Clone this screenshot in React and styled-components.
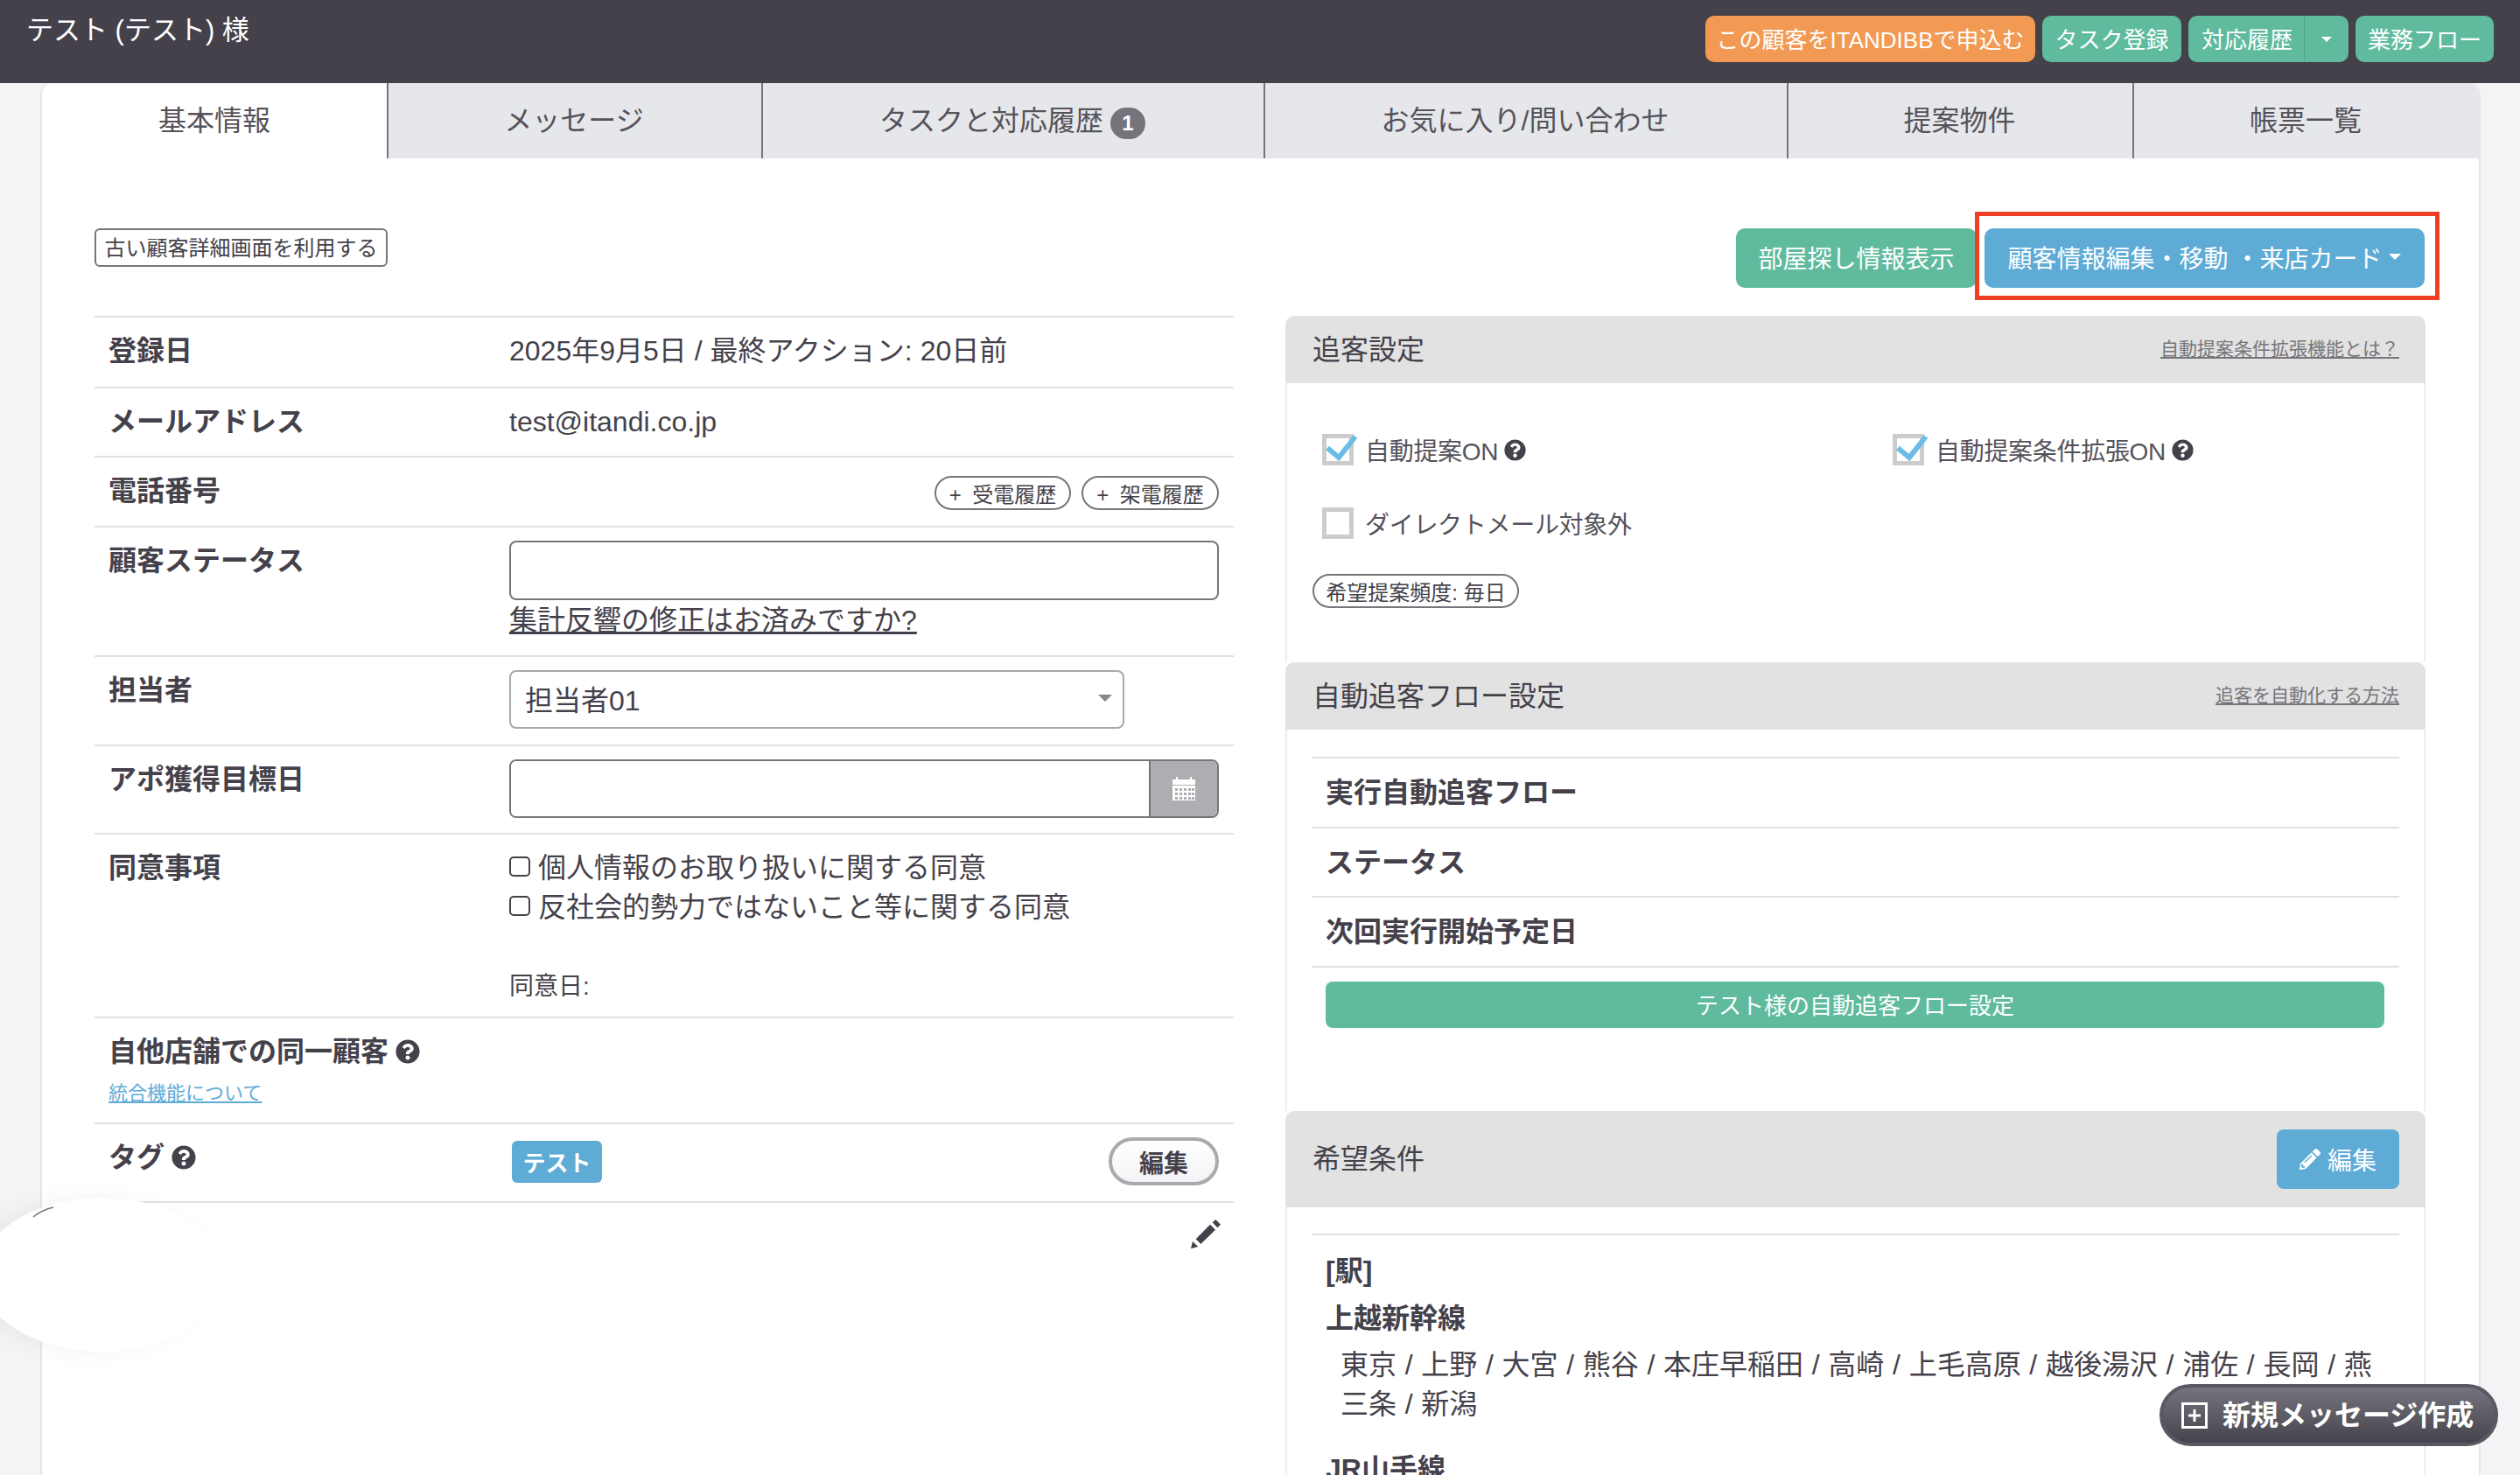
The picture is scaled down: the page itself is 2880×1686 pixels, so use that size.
import React from 'react'
import styled, { createGlobalStyle } from 'styled-components'
import { FaQuestionCircle, FaPencilAlt } from 'react-icons/fa'

const dark = '#44414a'
const green = '#60bb9e'
const blue = '#5eabd6'
const line = '#e0e0e0'

const GlobalStyle = createGlobalStyle`
  html, body {
    margin: 0;
    padding: 0;
    background: #f4f4f6;
  }
  body {
    font-family: "Liberation Sans", "Noto Sans CJK JP", sans-serif;
    color: ${dark};
    font-size: 32px;
  }
  * {
    box-sizing: border-box;
  }
`

const Page = styled.div`
  position: relative;
  width: 2880px;
  height: 1686px;
  overflow: hidden;
`

const Header = styled.header`
  height: 95px;
  background: ${dark};
  display: flex;
  justify-content: space-between;
  padding: 18px 30px 0 30px;
`

const CustomerName = styled.div`
  color: #fff;
  font-size: 31px;
  line-height: 34px;
`

const HeaderActions = styled.div`
  display: flex;
  gap: 8px;
  height: 53px;
`

const HeaderButton = styled.button`
  border: 0;
  border-radius: 10px;
  background: ${(p) => (p.$orange ? '#f29a53' : green)};
  color: #fff;
  font: inherit;
  font-size: 26px;
  padding: 0 0 2px;
  width: ${(p) => p.$w}px;
  height: 53px;
  white-space: nowrap;
  display: flex;
  align-items: center;
  justify-content: center;
`

const SplitButton = styled.div`
  display: flex;
  border-radius: 10px;
  overflow: hidden;
  background: ${green};
  color: #fff;
`

const SplitMain = styled.div`
  font-size: 26px;
  padding: 0 15px 2px;
  display: flex;
  align-items: center;
  width: 133px;
  white-space: nowrap;
  border-right: 1px solid #4fa488;
`

const SplitCaret = styled.div`
  width: 50px;
  display: flex;
  align-items: center;
  justify-content: center;
`

const Caret = styled.span`
  display: inline-block;
  border-left: ${(p) => p.$size || 7}px solid transparent;
  border-right: ${(p) => p.$size || 7}px solid transparent;
  border-top: ${(p) => p.$size || 7}px solid ${(p) => p.$color || '#fff'};
`

const Card = styled.main`
  margin: 0 45px 0 46px;
  height: 1591px;
  background: #fff;
  border-left: 2px solid #e6e6ea;
  border-right: 2px solid #e6e6ea;
  border-top-left-radius: 14px;
  border-top-right-radius: 14px;
  overflow: hidden;
`

const Tabs = styled.nav`
  display: grid;
  grid-template-columns: 394px 428px 574px 598px 395px 396px;
  height: 86px;
`

const Tab = styled.div`
  display: flex;
  align-items: center;
  justify-content: center;
  gap: 8px;
  padding: ${(p) => (p.$active ? '0 0 6px' : '0 2px 6px 0')};
  font-size: 32px;
  color: #55525a;
  background: ${(p) => (p.$active ? '#fff' : '#e6e7ea')};
  border-left: ${(p) => (p.$active ? '0' : '2px solid #77757c')};
`

const TabBadge = styled.span`
  width: 40px;
  height: 36px;
  margin-top: 12px;
  border-radius: 18px;
  background: #75737c;
  color: #fff;
  font-size: 24px;
  font-weight: 700;
  display: flex;
  align-items: center;
  justify-content: center;
`

const Content = styled.div`
  padding: 80px 60px 0 60px;
`

const Toolbar = styled.div`
  display: flex;
  justify-content: space-between;
  align-items: flex-start;
  width: 2663px;
  height: 100px;
`

const OldButton = styled.button`
  width: 335px;
  height: 44px;
  padding: 0 0 3px;
  border: 2px solid #77757c;
  border-radius: 6px;
  background: #fff;
  color: ${dark};
  font: inherit;
  font-size: 24px;
`

const ToolbarActions = styled.div`
  display: flex;
  gap: 9px;
`

const BigButton = styled.button`
  height: 68px;
  width: ${(p) => p.$w}px;
  border: 0;
  border-radius: 10px;
  background: ${(p) => p.$bg};
  color: #fff;
  font: inherit;
  font-size: 28px;
  padding: 0 0 3px;
  white-space: nowrap;
  display: flex;
  align-items: center;
  justify-content: center;
  gap: 8px;
`

const Highlighted = styled.div`
  position: relative;
`

const RedFrame = styled.div`
  position: absolute;
  top: -19px;
  left: -11px;
  right: -17px;
  bottom: -14px;
  border: 5px solid #ee3f23;
  pointer-events: none;
`

const Columns = styled.div`
  display: grid;
  grid-template-columns: 1302px 1303px;
  gap: 59px;
`

const InfoTable = styled.section`
  border-bottom: 2px solid ${line};
`

const InfoRow = styled.div`
  display: grid;
  grid-template-columns: 458px 811px;
  height: ${(p) => p.$h}px;
  padding: 15px 0 0 16px;
  border-top: 2px solid ${line};
`

const WideCell = styled.div`
  grid-column: 1 / 3;
`

const Label = styled.div`
  font-weight: 700;
  line-height: 46px;
  display: flex;
  align-self: start;
  align-items: center;
  gap: 8px;
`

const Value = styled.div`
  line-height: 46px;
`

const RightCell = styled.div`
  display: flex;
  justify-content: flex-end;
  gap: 12px;
  padding-top: 6px;
`

const OutlinePill = styled.button`
  height: 39px;
  width: ${(p) => p.$w}px;
  border: 2px solid #77757c;
  border-radius: 20px;
  background: #fff;
  color: ${dark};
  font: inherit;
  font-size: 24px;
  word-spacing: 6px;
  padding: 0 0 3px;
  white-space: nowrap;
`

const TextInput = styled.input`
  display: block;
  width: 811px;
  height: 68px;
  border: 2px solid #77757c;
  border-radius: 8px;
  background: #fff;
`

const UnderLink = styled.a`
  color: ${dark};
  text-decoration: underline;
  font-size: 32px;
`

const SelectBox = styled.div`
  width: 703px;
  height: 67px;
  border: 2px solid #a9a9a9;
  border-radius: 8px;
  padding: 0 12px 3px 16px;
  display: flex;
  align-items: center;
  justify-content: space-between;
`

const DateGroup = styled.div`
  width: 811px;
  height: 67px;
  display: flex;
  border: 2px solid #77757c;
  border-radius: 8px;
  overflow: hidden;
`

const DateField = styled.div`
  flex: 1;
  background: #fff;
`

const DateAddon = styled.div`
  width: 78px;
  background: #aeaeb2;
  border-left: 2px solid #77757c;
  display: flex;
  align-items: center;
  justify-content: center;
`

const AgreeLine = styled.div`
  display: flex;
  align-items: center;
  gap: 9px;
  height: 45px;
  padding-bottom: 5px;
  font-size: 32px;
`

const SmallBox = styled.span`
  width: 24px;
  height: 23px;
  margin-top: 3px;
  border: 2px solid ${dark};
  border-radius: 5px;
`

const AgreeDate = styled.div`
  margin-top: 46px;
  font-size: 28px;
  line-height: 46px;
`

const SmallLink = styled.a`
  display: block;
  margin-top: 10px;
  color: ${blue};
  text-decoration: underline;
  font-size: 22px;
  line-height: 30px;
`

const TagCell = styled.div`
  display: flex;
  justify-content: space-between;
  align-items: flex-start;
`

const TagChip = styled.span`
  margin: 4px 0 0 3px;
  padding-bottom: 2px;
  width: 103px;
  height: 48px;
  border-radius: 6px;
  background: ${blue};
  color: #fff;
  font-size: 26px;
  font-weight: 700;
  display: flex;
  align-items: center;
  justify-content: center;
`

const EditPill = styled.button`
  width: 126px;
  height: 55px;
  border: 4px solid #aaaaae;
  border-radius: 28px;
  background: linear-gradient(#fff, #f3f3f5);
  color: ${dark};
  font: inherit;
  font-size: 28px;
  font-weight: 700;
  padding: 0;
`

const PencilRow = styled.div`
  display: flex;
  justify-content: flex-end;
  padding-top: 10px;
`

const Panel = styled.section`
  display: block;
`

const PanelHead = styled.div`
  height: ${(p) => p.$h}px;
  background: #e2e2e2;
  border-radius: 10px 10px 0 0;
  padding: 0 30px 0 31px;
  display: flex;
  align-items: center;
  justify-content: space-between;
`

const PanelTitle = styled.h2`
  margin: 0;
  padding-bottom: 6px;
  font-size: 32px;
  font-weight: 400;
`

const PanelLink = styled.a`
  color: #77757c;
  font-size: 21px;
  text-decoration: underline;
  padding-bottom: 6px;
`

const PanelBody = styled.div`
  border-left: 2px solid #eeeeee;
  border-right: 2px solid #eeeeee;
  padding: ${(p) => p.$pad};
`

const CheckGrid = styled.div`
  display: grid;
  grid-template-columns: 652px 1fr;
  row-gap: 48px;
  height: 120px;
`

const CheckItem = styled.label`
  display: flex;
  align-items: center;
  height: 36px;
  font-size: 28px;
  letter-spacing: -0.3px;
  color: #55525a;
`

const CheckBox = styled.span`
  display: block;
  width: 36px;
  height: 36px;
  border: 5px solid #cccccc;
  margin-right: 13px;
`

const CheckMark = styled.svg`
  display: block;
  margin: -5px;
  overflow: visible;
`

const HelpIcon = styled(FaQuestionCircle)`
  font-size: ${(p) => p.$size || 25}px;
  color: ${dark};
  margin-left: ${(p) => p.$gap ?? 7}px;
  flex: none;
`

const FreqPill = styled(OutlinePill)`
  display: block;
  margin: 40px 0 0 -11px;
  word-spacing: 0;
`

const FlowTable = styled.div`
  border-bottom: 2px solid ${line};
`

const FlowRow = styled.div`
  height: 79.5px;
  border-top: 2px solid ${line};
  padding: 0 0 5px 16px;
  display: flex;
  align-items: center;
  font-weight: 700;
`

const FlowButton = styled.button`
  display: block;
  width: 1210px;
  height: 53px;
  margin: 16px 0 0 16px;
  border: 0;
  border-radius: 8px;
  background: ${green};
  color: #fff;
  font: inherit;
  font-size: 26px;
  padding: 0 0 2px;
`

const BlueEdit = styled.button`
  width: 140px;
  height: 68px;
  border: 0;
  border-radius: 8px;
  background: ${blue};
  color: #fff;
  font: inherit;
  font-size: 28px;
  padding: 0;
  display: flex;
  align-items: center;
  justify-content: center;
  gap: 8px;
`

const Conditions = styled.div`
  border-top: 2px solid ${line};
  padding: 18px 17px 0 16px;
`

const CondTitle = styled.div`
  font-weight: 700;
  line-height: 46px;
  margin-bottom: 8px;
`

const StationList = styled.div`
  padding-left: 17px;
  line-height: 45px;
  margin: 2px 0 28px;
  word-spacing: 0.8px;
`

const Blob = styled.div`
  position: absolute;
  left: -23px;
  top: 1369px;
  width: 280px;
  height: 176px;
  border-radius: 50%;
  background: #fff;
  box-shadow: -16px 0 26px -4px rgba(60, 60, 70, 0.08);
`

const BlobArc = styled.svg`
  position: absolute;
  left: 61px;
  top: 11px;
  overflow: visible;
`

const ComposeButton = styled.button`
  position: absolute;
  left: 2468px;
  top: 1582px;
  width: 387px;
  height: 71px;
  border: 4px solid #5a5862;
  border-radius: 36px;
  background: linear-gradient(#75737d, #45434c);
  color: #fff;
  font: inherit;
  font-size: 32px;
  font-weight: 700;
  padding: 0 0 0 21px;
  display: flex;
  align-items: center;
  gap: 17px;
  white-space: nowrap;
`

const ComposeLabel = styled.span`
  padding-bottom: 6px;
`

const Help = (props) => <HelpIcon {...props} />

const Check = ({ on }) => (
  <CheckBox>
    {on && (
      <CheckMark width="36" height="36" viewBox="0 0 36 36">
        <path d="M6 16 L19 27 L38 3" fill="none" stroke="#6cbde6" strokeWidth="6" />
      </CheckMark>
    )}
  </CheckBox>
)

const CalendarGlyph = () => (
  <svg width="26" height="27" viewBox="0 0 26 27">
    <path d="M0 3h4V0h2v3h14V0h2v3h4v6H0z" fill="#fff" />
    <path d="M0 10h26v17H0z" fill="#fff" />
    <g fill="#aeaeb2">
      {[13, 18, 23].map((y) =>
        [3, 8, 13, 18, 22].map((x) => <rect key={`${x}-${y}`} x={x} y={y} width="3" height="3" />)
      )}
    </g>
  </svg>
)

const Pencil = () => (
  <svg width="60" height="50" viewBox="0 0 180 150">
    <g fill={dark}>
      <polygon points="33,127 39,102 58,120" />
      <polygon points="50,94 99,44 117,62 67,111" />
      <polygon points="107,37 118,27 135,44 124,55" />
    </g>
  </svg>
)

const PlusSquare = () => (
  <svg width="30" height="30" viewBox="0 0 30 30">
    <rect x="1.5" y="1.5" width="27" height="27" fill="none" stroke="#fff" strokeWidth="3" />
    <path d="M8 15h14M15 8v14" stroke="#fff" strokeWidth="3" />
  </svg>
)

const tabs = ['基本情報', 'メッセージ', 'タスクと対応履歴', 'お気に入り/問い合わせ', '提案物件', '帳票一覧']
const flowRows = ['実行自動追客フロー', 'ステータス', '次回実行開始予定日']

const App = () => (
  <Page>
    <GlobalStyle />
    <Header>
      <CustomerName>テスト (テスト) 様</CustomerName>
      <HeaderActions>
        <HeaderButton $orange $w={377}>この顧客をITANDIBBで申込む</HeaderButton>
        <HeaderButton $w={159}>タスク登録</HeaderButton>
        <SplitButton>
          <SplitMain>対応履歴</SplitMain>
          <SplitCaret><Caret $size={6} /></SplitCaret>
        </SplitButton>
        <HeaderButton $w={158}>業務フロー</HeaderButton>
      </HeaderActions>
    </Header>

    <Card>
      <Tabs>
        {tabs.map((t, i) => (
          <Tab key={t} $active={i === 0}>
            {t}
            {i === 2 && <TabBadge>1</TabBadge>}
          </Tab>
        ))}
      </Tabs>

      <Content>
        <Toolbar>
          <OldButton>古い顧客詳細画面を利用する</OldButton>
          <ToolbarActions>
            <BigButton $w={275} $bg={green}>部屋探し情報表示</BigButton>
            <Highlighted>
              <BigButton $w={503} $bg={blue}>
                顧客情報編集・移動 ・来店カード
                <Caret $size={7} />
              </BigButton>
              <RedFrame />
            </Highlighted>
          </ToolbarActions>
        </Toolbar>

        <Columns>
          <div>
            <InfoTable>
              <InfoRow $h={81}>
                <Label>登録日</Label>
                <Value>2025年9月5日 / 最終アクション: 20日前</Value>
              </InfoRow>
              <InfoRow $h={79}>
                <Label>メールアドレス</Label>
                <Value>test@itandi.co.jp</Value>
              </InfoRow>
              <InfoRow $h={80}>
                <Label>電話番号</Label>
                <RightCell>
                  <OutlinePill $w={156}>+ 受電履歴</OutlinePill>
                  <OutlinePill $w={157}>+ 架電履歴</OutlinePill>
                </RightCell>
              </InfoRow>
              <InfoRow $h={148}>
                <Label>顧客ステータス</Label>
                <Value>
                  <TextInput readOnly />
                  <UnderLink>集計反響の修正はお済みですか?</UnderLink>
                </Value>
              </InfoRow>
              <InfoRow $h={102}>
                <Label>担当者</Label>
                <SelectBox>
                  担当者01
                  <Caret $size={8} $color="#88868c" />
                </SelectBox>
              </InfoRow>
              <InfoRow $h={101}>
                <Label>アポ獲得目標日</Label>
                <DateGroup>
                  <DateField />
                  <DateAddon><CalendarGlyph /></DateAddon>
                </DateGroup>
              </InfoRow>
              <InfoRow $h={210}>
                <Label>同意事項</Label>
                <div>
                  <AgreeLine><SmallBox />個人情報のお取り扱いに関する同意</AgreeLine>
                  <AgreeLine><SmallBox />反社会的勢力ではないこと等に関する同意</AgreeLine>
                  <AgreeDate>同意日:</AgreeDate>
                </div>
              </InfoRow>
              <InfoRow $h={121}>
                <WideCell>
                  <Label>自他店舗での同一顧客<Help $size={28} $gap={0} /></Label>
                  <SmallLink>統合機能について</SmallLink>
                </WideCell>
              </InfoRow>
              <InfoRow $h={90}>
                <Label>タグ<Help $size={28} $gap={0} /></Label>
                <TagCell>
                  <TagChip>テスト</TagChip>
                  <EditPill>編集</EditPill>
                </TagCell>
              </InfoRow>
            </InfoTable>
            <PencilRow><Pencil /></PencilRow>
          </div>

          <div>
            <Panel>
              <PanelHead $h={77}>
                <PanelTitle>追客設定</PanelTitle>
                <PanelLink>自動提案条件拡張機能とは？</PanelLink>
              </PanelHead>
              <PanelBody $pad="58px 0 62px 40px">
                <CheckGrid>
                  <CheckItem><Check on />自動提案ON<Help /></CheckItem>
                  <CheckItem><Check on />自動提案条件拡張ON<Help /></CheckItem>
                  <CheckItem><Check />ダイレクトメール対象外</CheckItem>
                </CheckGrid>
                <FreqPill $w={236}>希望提案頻度: 毎日</FreqPill>
              </PanelBody>
            </Panel>

            <Panel>
              <PanelHead $h={77}>
                <PanelTitle>自動追客フロー設定</PanelTitle>
                <PanelLink>追客を自動化する方法</PanelLink>
              </PanelHead>
              <PanelBody $pad="31px 28px 95px 28px">
                <FlowTable>
                  {flowRows.map((r) => <FlowRow key={r}>{r}</FlowRow>)}
                </FlowTable>
                <FlowButton>テスト様の自動追客フロー設定</FlowButton>
              </PanelBody>
            </Panel>

            <Panel>
              <PanelHead $h={110}>
                <PanelTitle>希望条件</PanelTitle>
                <BlueEdit><FaPencilAlt size={24} />編集</BlueEdit>
              </PanelHead>
              <PanelBody $pad="30px 28px 0 28px">
                <Conditions>
                  <CondTitle>[駅]</CondTitle>
                  <CondTitle>上越新幹線</CondTitle>
                  <StationList>
                    東京 / 上野 / 大宮 / 熊谷 / 本庄早稲田 / 高崎 / 上毛高原 / 越後湯沢 / 浦佐 / 長岡 / 燕三条 / 新潟
                  </StationList>
                  <CondTitle>JR山手線</CondTitle>
                </Conditions>
              </PanelBody>
            </Panel>
          </div>
        </Columns>
      </Content>
    </Card>

    <Blob>
      <BlobArc width="24" height="12" viewBox="0 0 24 12">
        <path d="M0 11 Q10 3 23 0" fill="none" stroke="#77757c" strokeWidth="1.5" />
      </BlobArc>
    </Blob>
    <ComposeButton><PlusSquare /><ComposeLabel>新規メッセージ作成</ComposeLabel></ComposeButton>
  </Page>
)

export default App
